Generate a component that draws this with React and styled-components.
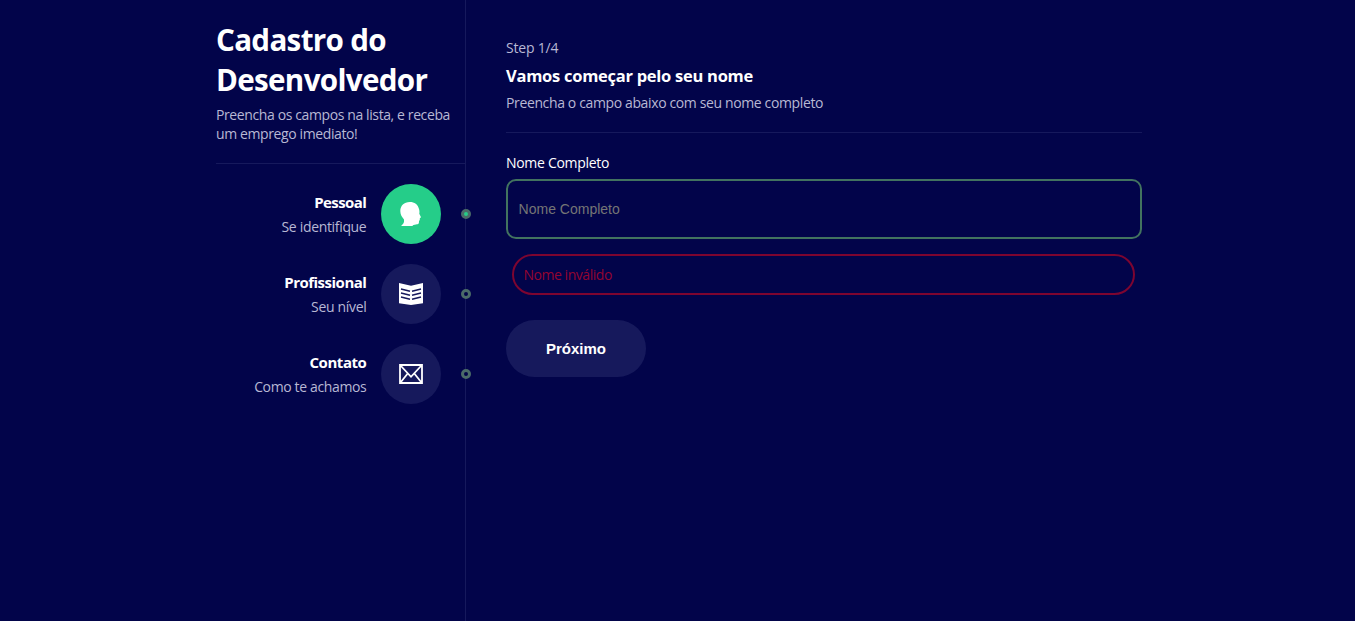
import React from 'react';
import styled, { createGlobalStyle } from 'styled-components';

const GlobalStyle = createGlobalStyle`
  * { box-sizing: border-box; margin: 0; padding: 0; }
  body {
    background: #02044a;
    color: #fff;
    font-family: 'Segoe UI', 'Open Sans', 'Noto Sans', sans-serif;
    overflow: hidden;
  }
`;

const Page = styled.div`
  display: flex;
  width: 926px;
  height: 100vh;
  margin-left: 216px;
`;

const Sidebar = styled.aside`
  width: 250px;
  flex-shrink: 0;
  padding-top: 20px;
  border-right: 1px solid #16195c;
`;

const Title = styled.h1`
  font-size: 29.6px;
  line-height: 40px;
  font-weight: 700;
  letter-spacing: -0.68px;
`;

const Intro = styled.p`
  padding: 5px 0 20px;
  border-bottom: 1px solid #16195c;
  font-size: 14px;
  line-height: 19px;
  color: #b8b8d4;
  letter-spacing: -0.39px;
  white-space: nowrap;
`;

const Steps = styled.nav`
  display: flex;
  flex-direction: column;
  gap: 20px;
  padding-top: 20px;
`;

const Step = styled.div`
  position: relative;
  display: flex;
  align-items: center;
  justify-content: flex-end;
  height: 60px;
  padding-right: 24px;
`;

const StepText = styled.div`
  margin-right: 14.6px;
  text-align: right;
  white-space: nowrap;
`;

const StepTitle = styled.div`
  font-size: 15px;
  line-height: 20px;
  font-weight: 700;
  margin-bottom: 5px;
  letter-spacing: ${(p) => p.$spacing}px;
`;

const StepDescription = styled.div`
  font-size: 14px;
  line-height: 19px;
  color: #b8b8d4;
  letter-spacing: ${(p) => p.$spacing}px;
`;

const IconCircle = styled.div`
  display: flex;
  align-items: center;
  justify-content: center;
  width: 60px;
  height: 60px;
  border-radius: 50%;
  background: ${(p) => (p.$active ? '#25cd89' : '#16195c')};
`;

const Point = styled.div`
  position: absolute;
  right: -6px;
  top: 25px;
  width: 10px;
  height: 10px;
  border: 3px solid #4a6b68;
  border-radius: 50%;
  background: ${(p) => (p.$active ? '#25cd89' : '#02044a')};
`;

const Main = styled.main`
  flex: 1;
  padding: 38px 0 0 40px;
`;

const Muted = styled.p`
  font-size: 14px;
  line-height: 19px;
  color: #b8b8d4;
  letter-spacing: ${(p) => p.$spacing}px;
`;

const Heading = styled.h2`
  margin: 7px 0 6px;
  font-size: 16.5px;
  line-height: 23px;
  font-weight: 700;
  letter-spacing: -0.27px;
`;

const Divider = styled.hr`
  height: 1px;
  margin: 20px 0;
  border: 0;
  background: #16195c;
`;

const Label = styled.label`
  display: block;
  font-size: 14px;
  line-height: 20px;
  letter-spacing: -0.3px;
`;

const Input = styled.input`
  display: block;
  width: 100%;
  height: 60px;
  margin-top: 6px;
  padding: 0 10.6px;
  border: 2px solid #42735f;
  border-radius: 10px;
  background: transparent;
  color: #fff;
  font-family: 'Liberation Sans', Arial, sans-serif;
  font-size: 14px;
  &::placeholder { color: #757575; }
`;

const ErrorMessage = styled.div`
  height: 41px;
  margin: 15px 7.3px 25px 6.4px;
  padding-left: 9px;
  border: 2px solid #7d0530;
  border-radius: 21px;
  color: #940530;
  font-size: 14px;
  line-height: 37px;
  letter-spacing: -0.45px;
`;

const NextButton = styled.button`
  width: 140px;
  height: 57px;
  border: 0;
  border-radius: 30px;
  background: #16195c;
  color: #fff;
  font-family: 'Liberation Sans', Arial, sans-serif;
  font-size: 15px;
  font-weight: 700;
`;

const HeadIcon = () => (
  <svg width="24" height="24" viewBox="0 0 24 24" fill="#fff">
    <path d="M10.800 0C5 0 1.300 3.800 1.300 9c0 3.500 1.600 6 3.700 8.500.3 2.700-.5 4.700-2.500 5.700V24h11c.4-1.300 1.500-1.400 3.500-1.600 2.700 0 3-.8 3-3.400.8-.8 1-1.800.8-2.800l1.200-.9-1.700-3.600c.4-1.700.1-3.300-.3-4.700C19 2.600 15.500 0 10.800 0Z" />
  </svg>
);

const BookIcon = () => (
  <svg width="24" height="24" viewBox="0 0 24 24">
    <path fill="#fff" d="M0 1l12 2.700L24 1v20.200l-12 1.900L0 21.200Z" />
    <path
      stroke="#16195c"
      strokeWidth="1.400"
      d="M2 7l9 2.200M2 11l9 2.200M2 15l9 2.200M22 7l-9 2.200M22 11l-9 2.200M22 15l-9 2.200"
    />
  </svg>
);

const MailIcon = () => (
  <svg width="24" height="24" viewBox="0 0 24 24" fill="none" stroke="#fff" strokeWidth="1.800">
    <path d="M1 3h22v18H1ZM1.500 3.500L12 14.800 22.500 3.500M1.500 20.500l7.200-9M22.500 20.500l-7.200-9" />
  </svg>
);

const steps = [
  { title: 'Pessoal', text: 'Se identifique', icon: HeadIcon, active: true, ts: -0.55, ds: -0.33 },
  { title: 'Profissional', text: 'Seu nível', icon: BookIcon, ts: -0.5, ds: -0.33 },
  { title: 'Contato', text: 'Como te achamos', icon: MailIcon, ts: -0.45, ds: -0.36 },
];

export default function App() {
  return (
    <>
      <GlobalStyle />
      <Page>
        <Sidebar>
          <Title>Cadastro do<br />Desenvolvedor</Title>
          <Intro>Preencha os campos na lista, e receba<br />um emprego imediato!</Intro>
          <Steps>
            {steps.map(({ title, text, icon: Icon, active, ts, ds }) => (
              <Step key={title}>
                <StepText>
                  <StepTitle $spacing={ts}>{title}</StepTitle>
                  <StepDescription $spacing={ds}>{text}</StepDescription>
                </StepText>
                <IconCircle $active={active}><Icon /></IconCircle>
                <Point $active={active} />
              </Step>
            ))}
          </Steps>
        </Sidebar>
        <Main>
          <Muted $spacing={-0.2}>Step 1/4</Muted>
          <Heading>Vamos começar pelo seu nome</Heading>
          <Muted $spacing={-0.37}>Preencha o campo abaixo com seu nome completo</Muted>
          <Divider />
          <Label htmlFor="name">Nome Completo</Label>
          <Input id="name" placeholder="Nome Completo" />
          <ErrorMessage>Nome inválido</ErrorMessage>
          <NextButton>Próximo</NextButton>
        </Main>
      </Page>
    </>
  );
}
